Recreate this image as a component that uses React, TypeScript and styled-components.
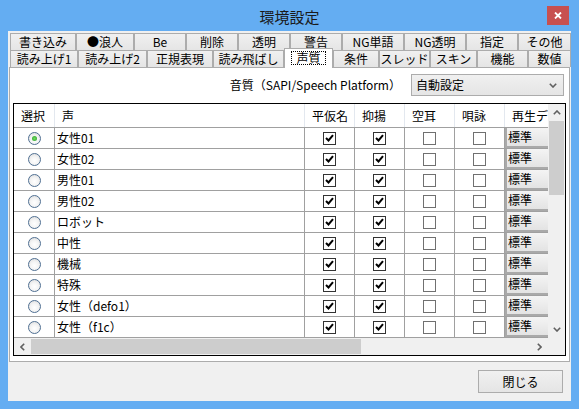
import React from "react";
import styled, { createGlobalStyle, css } from "styled-components";

const GlobalStyle = createGlobalStyle`
  html, body {
    margin: 0;
    padding: 0;
    background: #ffffff;
  }
  body {
    font-family: "Noto Sans CJK JP", "Noto Sans", sans-serif;
    font-size: 12px;
    color: #000;
  }
`;

const topTabs = [
  { label: "書き込み", w: 66 },
  { label: "●浪人", w: 58 },
  { label: "Be", w: 52 },
  { label: "削除", w: 52 },
  { label: "透明", w: 52 },
  { label: "警告", w: 52 },
  { label: "NG単語", w: 62 },
  { label: "NG透明", w: 62 },
  { label: "指定", w: 52 },
  { label: "その他", w: 53 },
];

const bottomTabs = [
  { label: "読み上げ1", w: 68 },
  { label: "読み上げ2", w: 69 },
  { label: "正規表現", w: 66 },
  { label: "読み飛ばし", w: 71 },
  { label: "声質", w: 49, active: true },
  { label: "条件", w: 46 },
  { label: "スレッド", w: 51 },
  { label: "スキン", w: 47 },
  { label: "機能", w: 51 },
  { label: "数値", w: 43 },
];

const columns = [
  { label: "選択", w: 41 },
  { label: "声", w: 250 },
  { label: "平仮名", w: 50 },
  { label: "抑揚", w: 50 },
  { label: "空耳", w: 50 },
  { label: "唄詠", w: 50 },
  { label: "再生デバイス", w: 100 },
];

const voices = [
  "女性01",
  "女性02",
  "男性01",
  "男性02",
  "ロボット",
  "中性",
  "機械",
  "特殊",
  "女性（defo1）",
  "女性（f1c）",
];

const App: React.FC = () => {
  return (
    <>
      <GlobalStyle />
      <Window>
        <TitleBar>
          <Title>環境設定</Title>
          <CloseButton>
            <svg width="8" height="7" viewBox="0 0 8 7">
              <path d="M1 0.5 L7 6.5 M7 0.5 L1 6.5" stroke="#fff" strokeWidth="1.8" />
            </svg>
          </CloseButton>
        </TitleBar>
        <Client>
          <TabControl>
            <TabRow>
              {topTabs.map((t) => (
                <Tab key={t.label} $w={t.w}>
                  {t.label}
                </Tab>
              ))}
            </TabRow>
            <TabRow $front>
              {bottomTabs.map((t) => (
                <Tab key={t.label} $w={t.w} $active={t.active}>
                  {t.active ? <FocusText>{t.label}</FocusText> : t.label}
                </Tab>
              ))}
            </TabRow>
            <Panel>
              <QualityRow>
                <span>音質（SAPI/Speech Platform）</span>
                <Combo>
                  <span>自動設定</span>
                  <svg width="8" height="5" viewBox="0 0 8 5">
                    <path d="M0.8 0.8 L4 4 L7.2 0.8" stroke="#606060" strokeWidth="1.6" fill="none" />
                  </svg>
                </Combo>
              </QualityRow>
              <List>
                <GridView>
                  <HeaderRow>
                    {columns.map((c) => (
                      <HeaderCell key={c.label} $w={c.w}>
                        {c.label}
                      </HeaderCell>
                    ))}
                  </HeaderRow>
                  {voices.map((v, i) => (
                    <Row key={v}>
                      <Cell $w={41} $center>
                        <Radio $on={i === 0} />
                      </Cell>
                      <Cell $w={250}>
                        <CellText>{v}</CellText>
                      </Cell>
                      <Cell $w={50} $center>
                        <CheckBox $on>
                          <CheckMark />
                        </CheckBox>
                      </Cell>
                      <Cell $w={50} $center>
                        <CheckBox $on>
                          <CheckMark />
                        </CheckBox>
                      </Cell>
                      <Cell $w={50} $center>
                        <CheckBox />
                      </Cell>
                      <Cell $w={50} $center>
                        <CheckBox />
                      </Cell>
                      <Cell $w={100}>
                        <DeviceButton>標準</DeviceButton>
                      </Cell>
                    </Row>
                  ))}
                </GridView>
                <VScroll>
                  <ScrollArrow>
                    <svg width="8" height="5" viewBox="0 0 8 5">
                      <path d="M0.8 4.2 L4 1 L7.2 4.2" stroke="#606060" strokeWidth="1.6" fill="none" />
                    </svg>
                  </ScrollArrow>
                  <VThumb />
                  <Track />
                  <ScrollArrow>
                    <svg width="8" height="5" viewBox="0 0 8 5">
                      <path d="M0.8 0.8 L4 4 L7.2 0.8" stroke="#606060" strokeWidth="1.6" fill="none" />
                    </svg>
                  </ScrollArrow>
                </VScroll>
                <HScroll>
                  <ScrollArrow>
                    <svg width="5" height="8" viewBox="0 0 5 8">
                      <path d="M4.2 0.8 L1 4 L4.2 7.2" stroke="#606060" strokeWidth="1.6" fill="none" />
                    </svg>
                  </ScrollArrow>
                  <HThumb />
                  <Track />
                  <ScrollArrow>
                    <svg width="5" height="8" viewBox="0 0 5 8">
                      <path d="M0.8 0.8 L4 4 L0.8 7.2" stroke="#606060" strokeWidth="1.6" fill="none" />
                    </svg>
                  </ScrollArrow>
                </HScroll>
                <Corner />
              </List>
            </Panel>
          </TabControl>
          <Footer>
            <Button>閉じる</Button>
          </Footer>
        </Client>
      </Window>
    </>
  );
};

export default App;

const CheckMark = () => (
  <svg width="9" height="8" viewBox="0 0 9 8">
    <path d="M1 4 L3.5 6.5 L8 1.2" stroke="#000" strokeWidth="2" fill="none" />
  </svg>
);

const Window = styled.div`
  width: 579px;
  height: 409px;
  background: #64adf2;
  display: flex;
  flex-direction: column;
  overflow: hidden;
`;

const TitleBar = styled.div`
  height: 31px;
  flex-shrink: 0;
  display: grid;
  grid-template-columns: 1fr auto 1fr;
  align-items: center;
`;

const Title = styled.div`
  grid-column: 2;
  font-size: 15px;
  line-height: 20px;
  color: #1a1a1a;
  padding-top: 2px;
`;

const CloseButton = styled.div`
  grid-column: 3;
  justify-self: end;
  align-self: start;
  margin: 6px 10px 0 0;
  width: 22px;
  height: 19px;
  background: #c75050;
  display: flex;
  align-items: center;
  justify-content: center;
`;

const Client = styled.div`
  margin: 0 8px 8px;
  flex: 1;
  background: #f0f0f0;
  display: flex;
  flex-direction: column;
`;

const TabControl = styled.div`
  padding: 2px 0 0 1px;
  display: flex;
  flex-direction: column;
`;

const TabRow = styled.div<{ $front?: boolean }>`
  display: flex;
  height: 17px;
  padding-left: 1px;
  position: relative;
  z-index: ${({ $front }) => ($front ? 2 : 1)};
`;

const Tab = styled.div<{ $w: number; $active?: boolean }>`
  width: ${({ $w }) => $w}px;
  flex-shrink: 0;
  box-sizing: border-box;
  height: 17px;
  border: 1px solid #acacac;
  border-bottom: none;
  background: linear-gradient(#f0f0f0, #e5e5e5);
  display: flex;
  align-items: center;
  justify-content: center;
  font-size: 12px;
  line-height: 14px;
  white-space: nowrap;
  ${({ $active }) =>
    $active &&
    css`
      background: #fff;
      height: 20px;
      margin-top: -2px;
      align-self: flex-start;
      padding-bottom: 1px;
    `}
`;

const FocusText = styled.span`
  border: 1px dotted #000;
  padding: 0 4px;
  line-height: 12px;
`;

const Panel = styled.div`
  height: 295px;
  box-sizing: border-box;
  margin-right: 1px;
  border: 1px solid #acacac;
  background: #fff;
  padding: 6px 3px 5px 3px;
  display: flex;
  flex-direction: column;
  gap: 7px;
`;

const QualityRow = styled.div`
  height: 22px;
  display: flex;
  justify-content: flex-end;
  align-items: center;
  gap: 10px;
  padding-right: 2px;
  line-height: 14px;
`;

const Combo = styled.div`
  width: 153px;
  height: 22px;
  box-sizing: border-box;
  border: 1px solid #acacac;
  background: linear-gradient(#f0f0f0, #e5e5e5);
  display: flex;
  align-items: center;
  justify-content: space-between;
  padding: 0 6px 0 4px;
`;

const List = styled.div`
  height: 253px;
  box-sizing: border-box;
  border: 1px solid #000;
  background: #fff;
  display: grid;
  grid-template-columns: 1fr 17px;
  grid-template-rows: 1fr 17px;
`;

const GridView = styled.div`
  overflow: hidden;
  display: flex;
  flex-direction: column;
`;

const HeaderRow = styled.div`
  height: 24px;
  flex-shrink: 0;
  box-sizing: border-box;
  display: flex;
  border-bottom: 1px solid #a0a0a0;
`;

const HeaderCell = styled.div<{ $w: number }>`
  width: ${({ $w }) => $w}px;
  flex-shrink: 0;
  box-sizing: border-box;
  border-right: 1px solid #e3e8ef;
  padding-left: 7px;
  display: flex;
  align-items: center;
  line-height: 14px;
  white-space: nowrap;
  overflow: hidden;
`;

const Row = styled.div`
  height: 21px;
  flex-shrink: 0;
  box-sizing: border-box;
  display: flex;
  border-bottom: 1px solid #a0a0a0;
`;

const Cell = styled.div<{ $w: number; $center?: boolean }>`
  width: ${({ $w }) => $w}px;
  flex-shrink: 0;
  box-sizing: border-box;
  border-right: 1px solid #a0a0a0;
  display: flex;
  align-items: center;
  justify-content: ${({ $center }) => ($center ? "center" : "flex-start")};
`;

const CellText = styled.span`
  padding-left: 2px;
  line-height: 14px;
  white-space: nowrap;
`;

const Radio = styled.span<{ $on?: boolean }>`
  width: 13px;
  height: 13px;
  box-sizing: border-box;
  border-radius: 50%;
  border: 1px solid #4f6f92;
  background: radial-gradient(circle at 50% 60%, #ffffff 0%, #f4f4f4 45%, #d8d8d8 100%);
  display: flex;
  align-items: center;
  justify-content: center;
  &::after {
    content: "";
    display: ${({ $on }) => ($on ? "block" : "none")};
    width: 5px;
    height: 5px;
    border-radius: 50%;
    background: radial-gradient(circle, #6fdc5e 0%, #2a9c2a 100%);
  }
`;

const CheckBox = styled.span<{ $on?: boolean }>`
  width: 13px;
  height: 13px;
  box-sizing: border-box;
  border: 1px solid ${({ $on }) => ($on ? "#333333" : "#707070")};
  background: #fff;
  display: flex;
  align-items: center;
  justify-content: center;
`;

const DeviceButton = styled.div`
  align-self: stretch;
  flex: 1;
  box-sizing: border-box;
  border-left: 2px solid #a9a9a9;
  border-bottom: 2px solid #a9a9a9;
  background: linear-gradient(#f4f4f4, #e3e3e3);
  padding-left: 1px;
  display: flex;
  align-items: center;
  line-height: 14px;
`;

const VScroll = styled.div`
  background: #f0f0f0;
  display: flex;
  flex-direction: column;
`;

const HScroll = styled.div`
  background: #f0f0f0;
  display: flex;
`;

const ScrollArrow = styled.div`
  width: 17px;
  height: 17px;
  flex-shrink: 0;
  display: flex;
  align-items: center;
  justify-content: center;
`;

const Track = styled.div`
  flex: 1;
`;

const VThumb = styled.div`
  height: 74px;
  margin: 0 1px;
  background: #cdcdcd;
`;

const HThumb = styled.div`
  width: 330px;
  margin: 1px 0;
  background: #cdcdcd;
`;

const Corner = styled.div`
  background: #f0f0f0;
`;

const Footer = styled.div`
  display: flex;
  justify-content: flex-end;
  padding: 8px 8px 0 0;
`;

const Button = styled.div`
  width: 85px;
  height: 23px;
  box-sizing: border-box;
  border: 1px solid #acacac;
  background: linear-gradient(#f0f0f0, #e5e5e5);
  display: flex;
  align-items: center;
  justify-content: center;
  line-height: 14px;
`;
